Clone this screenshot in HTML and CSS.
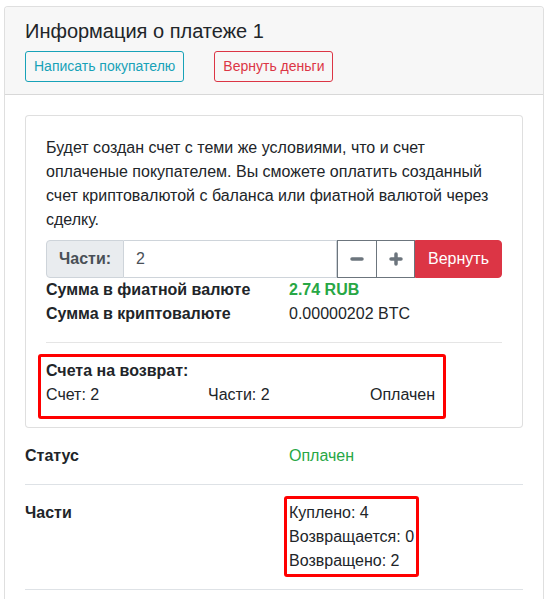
FILE: index.html
```html
<!DOCTYPE html>
<html lang="ru">
<head>
<meta charset="utf-8">
<link rel="stylesheet" href="styles.css">
</head>
<body>
<div class="page">
  <div class="card">
    <div class="card-header">
      <h5 class="title">Информация о платеже 1</h5>
      <div class="actions">
        <button class="btn btn-sm btn-outline-info">Написать покупателю</button>
        <button class="btn btn-sm btn-outline-danger">Вернуть деньги</button>
      </div>
    </div>
    <div class="card-body">
      <div class="card inner">
        <div class="card-body">
          <p class="lead-text">Будет создан счет с теми же условиями, что и счет оплаченые покупателем. Вы сможете оплатить созданный счет криптовалютой с баланса или фиатной валютой через сделку.</p>
          <div class="input-group">
            <span class="ig-text">Части:</span>
            <input class="ig-input" type="text" value="2">
            <button class="btn btn-outline-secondary icon-btn" aria-label="minus">
              <svg width="14" height="14" viewBox="0 0 14 14"><line x1="2" y1="7" x2="12" y2="7" stroke="#6c757d" stroke-width="3.5" stroke-linecap="round"/></svg>
            </button>
            <button class="btn btn-outline-secondary icon-btn" aria-label="plus">
              <svg width="14" height="14" viewBox="0 0 14 14"><line x1="2" y1="7" x2="12" y2="7" stroke="#6c757d" stroke-width="3.5" stroke-linecap="round"/><line x1="7" y1="2" x2="7" y2="12" stroke="#6c757d" stroke-width="3.5" stroke-linecap="round"/></svg>
            </button>
            <button class="btn btn-danger btn-return">Вернуть</button>
          </div>
          <div class="grid2">
            <div class="b">Сумма в фиатной валюте</div>
            <div class="b green">2.74 RUB</div>
            <div class="b">Сумма в криптовалюте</div>
            <div>0.00000202 BTC</div>
          </div>
          <hr class="sep">
          <div class="refunds">
            <div class="b">Счета на возврат:</div>
            <div class="refund-row">
              <span>Счет: 2</span>
              <span>Части: 2</span>
              <span>Оплачен</span>
            </div>
            <div class="mark mark-refunds"></div>
          </div>
        </div>
      </div>
      <div class="info-row">
        <div class="b">Статус</div>
        <div class="green">Оплачен</div>
      </div>
      <div class="info-row">
        <div class="b">Части</div>
        <div>
          <div class="parts">
            <div>Куплено: 4</div>
            <div>Возвращается: 0</div>
            <div>Возвращено: 2</div>
            <div class="mark mark-parts"></div>
          </div>
        </div>
      </div>
    </div>
  </div>
</div>
</body>
</html>
```

FILE: styles.css
```css
* { box-sizing: border-box; }
html, body { margin: 0; padding: 0; background: #fff; }
body {
  font-family: "Liberation Sans", Arial, sans-serif;
  font-size: 16px;
  line-height: 1.5;
  color: #212529;
}
.page { padding: 6px 6px 0 4px; }
.card {
  border: 1px solid rgba(0,0,0,.125);
  border-radius: 4px;
  background: #fff;
}
.page > .card { border-bottom-left-radius: 0; border-bottom-right-radius: 0; }
.card-header {
  background: #f7f7f7;
  border-bottom: 1px solid rgba(0,0,0,.125);
  padding: 12px 20px 12px 20px;
  border-radius: 3px 3px 0 0;
}
.title {
  margin: 0 0 8px 0;
  font-size: 20px;
  font-weight: 500;
  line-height: 1.2;
}
.actions { display: flex; gap: 30px; }
.btn {
  font-family: inherit;
  display: inline-flex;
  align-items: center;
  justify-content: center;
  border: 1px solid transparent;
  background: transparent;
  padding: 6px 12px;
  font-size: 16px;
  line-height: 1.5;
  border-radius: 4px;
  cursor: pointer;
}
.btn-sm {
  padding: 4px 8px;
  font-size: 14px;
  line-height: 1.5;
  border-radius: 3px;
}
.btn-outline-info { color: #17a2b8; border-color: #17a2b8; }
.btn-outline-danger { color: #dc3545; border-color: #dc3545; }
.btn-outline-secondary { border-color: #6c757d; }
.btn-danger { background: #dc3545; border-color: #dc3545; color: #fff; }
.card-body { padding: 20px; }
.inner .card-body { padding: 20px; }
.lead-text { margin: 0 0 8px 0; }
.input-group { display: flex; height: 38px; }
.ig-text {
  display: flex;
  align-items: center;
  padding: 6px 12px;
  background: #e9ecef;
  border: 1px solid #ced4da;
  border-radius: 4px 0 0 4px;
  font-weight: 700;
  color: #495057;
}
.ig-input {
  flex: 1;
  min-width: 0;
  border: 1px solid #ced4da;
  border-left: 0;
  padding: 6px 12px;
  font-family: inherit;
  font-size: 16px;
  color: #495057;
  outline: none;
}
.icon-btn { border-radius: 0; width: 40px; padding: 0; }
.icon-btn + .icon-btn { border-left: 0; width: 38px; }
.btn-return { border-radius: 0 4px 4px 0; width: 87px; padding: 6px 12px; }
.grid2 {
  display: grid;
  grid-template-columns: 243px 1fr;
}
.b { font-weight: 700; }
.green { color: #28a745; }
.sep {
  margin: 16px 0;
  border: 0;
  border-top: 1px solid rgba(0,0,0,.1);
}
.refunds { position: relative; width: 388px; }
.refund-row { display: grid; grid-template-columns: 162px 162px auto; }
.mark {
  position: absolute;
  border: 3px solid #ff0000;
  border-radius: 3px;
  pointer-events: none;
}
.mark-refunds { left: -8px; top: -5px; right: -12px; bottom: -12px; }
.info-row {
  display: grid;
  grid-template-columns: 264px 1fr;
  padding: 16px 0;
  border-bottom: 1px solid #dee2e6;
}
.parts { position: relative; display: inline-block; }
.mark-parts { left: -5px; top: -5px; right: -5px; bottom: -4px; }
```
